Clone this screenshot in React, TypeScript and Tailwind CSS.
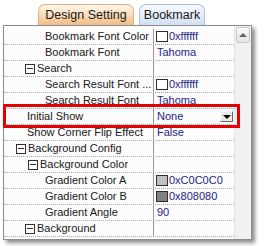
import React from "react";

type Row = {
  name: string;
  indent: number;
  box?: boolean;
  value?: string;
  swatch?: string;
  dropdown?: boolean;
};

const rows: Row[] = [
  { name: "Bookmark Font Color", indent: 41, value: "0xffffff", swatch: "#ffffff" },
  { name: "Bookmark Font", indent: 41, value: "Tahoma" },
  { name: "Search", indent: 21, box: true },
  { name: "Search Result Font ...", indent: 41, value: "0xffffff", swatch: "#ffffff" },
  { name: "Search Result Font", indent: 41, value: "Tahoma" },
  { name: "Initial Show", indent: 23, value: "None", dropdown: true },
  { name: "Show Corner Flip Effect", indent: 23, value: "False" },
  { name: "Background Config", indent: 12, box: true },
  { name: "Background Color", indent: 24, box: true },
  { name: "Gradient Color A", indent: 41, value: "0xC0C0C0", swatch: "#c0c0c0" },
  { name: "Gradient Color B", indent: 41, value: "0x808080", swatch: "#808080" },
  { name: "Gradient Angle", indent: 41, value: "90" },
  { name: "Background", indent: 21, box: true },
];

function MinusBox() {
  return (
    <span className="relative mr-[2px] inline-block h-[10px] w-[10px] shrink-0 border border-[#303030] bg-white">
      <span className="absolute left-[1px] top-[3px] h-[1px] w-[6px] bg-[#303030]" />
    </span>
  );
}

export default function App() {
  return (
    <div
      className="relative h-[246px] w-[264px] overflow-hidden bg-white text-[#202020]"
      style={{ fontFamily: '"Liberation Sans", Arial, sans-serif' }}
    >
      {/* Tabs */}
      <div className="flex h-[25px] items-end gap-[5px] pl-[38px] pt-[4px]">
        <div className="flex h-[21px] w-[96px] items-center justify-center rounded-t-[7px] border border-b-0 border-[#e0b07e] bg-gradient-to-b from-[#fff8ee] via-[#f9dcba] to-[#f0bb86] pt-[1px] text-[12.5px] text-[#1a1a1a]">
          Design Setting
        </div>
        <div className="flex h-[21px] w-[66px] items-center justify-center rounded-t-[7px] border border-b-0 border-[#a9c1dd] bg-gradient-to-b from-[#f7faff] via-[#e6eef9] to-[#d0dff2] pt-[1px] text-[12.5px] text-[#1a1a1a]">
          Bookmark
        </div>
      </div>

      {/* Panel */}
      <div className="ml-[3px] flex h-[215px] w-[249px] border border-[#8c8c8c] bg-[#fcfcfc] shadow-[3px_3px_4px_rgba(0,0,0,0.45)]">
        <div className="flex flex-1 flex-col pt-[3px]">
          {rows.map((r, i) => (
            <div
              key={i}
              className="flex h-[16px] shrink-0 border-b border-dotted border-[#a8a8a8] text-[11px] leading-[15px]"
            >
              <div
                className="flex w-[150px] shrink-0 items-center whitespace-nowrap border-r border-[#9a9a9a]"
                style={{ paddingLeft: r.indent }}
              >
                {r.box && <MinusBox />}
                {r.name}
              </div>
              <div className="flex flex-1 items-center whitespace-nowrap pl-[2px] text-[#24248a]">
                {r.swatch && (
                  <span
                    className="mr-[1px] inline-block h-[11px] w-[12px] shrink-0 border border-[#303030]"
                    style={{ backgroundColor: r.swatch }}
                  />
                )}
                <span className={r.swatch ? "" : "pl-[1px]"}>{r.value}</span>
                {r.dropdown && (
                  <span className="ml-auto mr-[1px] flex h-[11px] w-[13px] items-center justify-center border border-[#606060] border-l-white border-t-white bg-[#ece9e4]">
                    <span className="h-0 w-0 border-l-[4px] border-r-[4px] border-t-[4px] border-l-transparent border-r-transparent border-t-black" />
                  </span>
                )}
              </div>
            </div>
          ))}
        </div>
        {/* Scrollbar */}
        <div className="flex w-[17px] flex-col border-l border-[#e4e4e4] bg-[#f1f1f1] pt-[1px]">
          <div className="mx-[1px] flex h-[16px] items-center justify-center rounded-[2px] border border-[#c8c8c8] bg-gradient-to-b from-[#fafafa] to-[#e4e4e4]">
            <span className="h-0 w-0 border-b-[4px] border-l-[4px] border-r-[4px] border-b-[#606060] border-l-transparent border-r-transparent" />
          </div>
        </div>
      </div>

      {/* Red highlight annotation */}
      <div className="absolute left-[3px] top-[104px] h-[24px] w-[237px] border-[3px] border-[#e60000]" />
    </div>
  );
}
